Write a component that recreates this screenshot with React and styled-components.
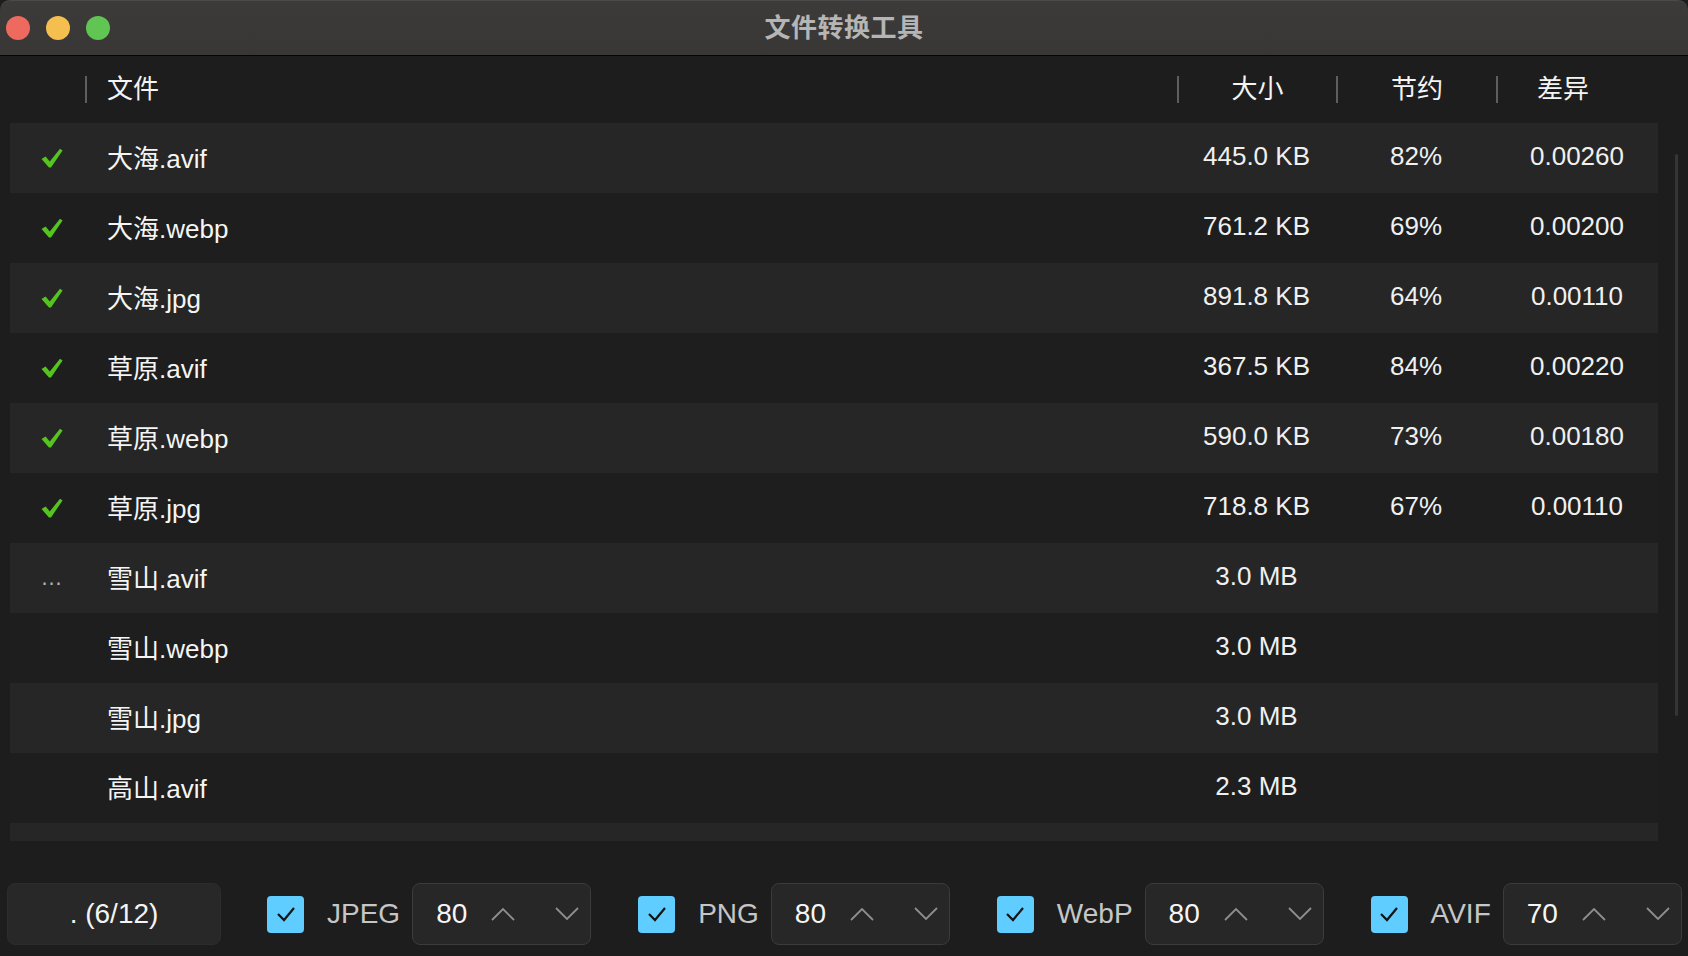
import React from 'react';
import styled, { createGlobalStyle } from 'styled-components';

const Global = createGlobalStyle`
  html, body {
    margin: 0;
    padding: 0;
    background: #1d1d1d;
  }
  body {
    font-family: "Liberation Sans", "Noto Sans CJK SC", sans-serif;
    color: #f2f2f2;
  }
`;

const Window = styled.div`
  width: 1688px;
  height: 956px;
  display: flex;
  flex-direction: column;
  background: #1d1d1d;
  overflow: hidden;
`;

const TitleBar = styled.div`
  height: 56px;
  flex-shrink: 0;
  box-sizing: border-box;
  display: grid;
  grid-template-columns: 1fr auto 1fr;
  align-items: center;
  padding-left: 6px;
  background: linear-gradient(180deg, #3c3b3a 0%, #383735 100%);
  border-top: 1px solid #4a4a4a;
  border-bottom: 1px solid #050505;
  border-radius: 10px 10px 0 0;
`;

const Lights = styled.div`
  display: flex;
  gap: 16px;
`;

const Light = styled.span`
  width: 24px;
  height: 24px;
  border-radius: 50%;
  background: ${p => p.$color};
`;

const Title = styled.div`
  font-size: 26px;
  font-weight: 700;
  color: #b5b5b5;
  letter-spacing: 0.5px;
  line-height: 1;
  margin-right: 6px;
`;

const Body = styled.div`
  display: flex;
  padding-left: 10px;
  flex-shrink: 0;
`;

const Table = styled.div`
  flex: 1;
  display: flex;
  flex-direction: column;
`;

const Gutter = styled.div`
  width: 30px;
  display: flex;
  justify-content: flex-end;
  padding-right: 10px;
  box-sizing: border-box;
`;

const Thumb = styled.div`
  width: 3px;
  height: 562px;
  margin-top: 98px;
  border-radius: 2px;
  background: #353535;
`;

const cols = '75px 1092px 159px 160px 1fr';

const HeaderRow = styled.div`
  height: 67px;
  display: grid;
  grid-template-columns: ${cols};
  align-items: center;
`;

const HeaderCell = styled.div`
  height: 27px;
  display: flex;
  align-items: center;
  justify-content: ${p => (p.$left ? 'flex-start' : 'center')};
  padding-left: ${p => (p.$left ? '20px' : '0')};
  padding-right: ${p => p.$pr || 0}px;
  border-left: ${p => (p.$bare ? 'none' : '2px solid #5e5e5e')};
  font-size: 26px;
  line-height: 1.2;
  color: #f4f4f4;
`;

const List = styled.div`
  height: 718px;
  overflow: hidden;
`;

const Row = styled.div`
  height: 70px;
  display: grid;
  grid-template-columns: ${cols};
  align-items: center;
  background: ${p => (p.$alt ? '#262626' : '#1e1e1e')};
  font-size: 26px;
  line-height: 1.2;
`;

const Status = styled.div`
  display: flex;
  justify-content: center;
  padding-left: 8px;
  color: #b4b4b4;
  font-size: 22px;
`;

const Name = styled.div`
  padding-left: 22px;
  padding-top: 4px;
  color: #f5f5f5;
  white-space: nowrap;
`;

const Num = styled.div`
  text-align: center;
  color: #f0f0f0;
  padding-bottom: 2px;
`;

const Footer = styled.div`
  flex: 1;
  display: flex;
  align-items: center;
  padding: 31px 0 0 7px;
  font-size: 28px;
  line-height: 1.2;
`;

const ProgressButton = styled.div`
  width: 214px;
  height: 62px;
  flex-shrink: 0;
  box-sizing: border-box;
  display: flex;
  align-items: center;
  justify-content: center;
  background: #282828;
  border: 1px solid #2c2c2c;
  border-radius: 8px;
  color: #f4f4f4;
  margin-right: 46px;
`;

const Group = styled.div`
  display: flex;
  flex-shrink: 0;
  align-items: center;
  margin-right: 47px;

  &:last-child {
    margin-right: 0;
  }
`;

const Box = styled.span`
  width: 37px;
  height: 37px;
  flex-shrink: 0;
  border-radius: 4px;
  background: #5fcdff;
  display: flex;
  align-items: center;
  justify-content: center;
  margin-right: 23px;
`;

const Label = styled.span`
  color: #c6c6c6;
  margin-right: 12px;
`;

const Spin = styled.div`
  width: 179px;
  height: 62px;
  flex-shrink: 0;
  box-sizing: border-box;
  display: flex;
  align-items: center;
  padding: 0 11px 0 23px;
  background: #272727;
  border: 1.5px solid #3b3b3b;
  border-radius: 8px;
  color: #f6f6f6;
`;

const Arrows = styled.div`
  margin-left: auto;
  display: flex;
  gap: 40px;
  align-items: center;
`;

const Chevron = ({ up }) => (
  <svg width="24" height="14" viewBox="0 0 24 14" fill="none">
    <polyline
      points={up ? '1,13 12,2 23,13' : '1,1 12,12 23,1'}
      stroke="#8e8e8e"
      strokeWidth="1.8"
      strokeLinejoin="miter"
    />
  </svg>
);

const Tick = () => (
  <svg width="22" height="20" viewBox="0 0 22 20">
    <path d="M0.5 11 L4.6 8.4 L8.8 13.4 L19 0.8 L21.6 2.4 L10 19.4 L8 19.4 Z" fill="#56c41e" />
  </svg>
);

const BoxTick = () => (
  <svg width="22" height="18" viewBox="0 0 22 18" fill="none">
    <polyline points="3,9 9,15 19,3" stroke="#141414" strokeWidth="2.2" />
  </svg>
);

const rows = [
  { st: 'done', name: '大海.avif', size: '445.0 KB', save: '82%', diff: '0.00260' },
  { st: 'done', name: '大海.webp', size: '761.2 KB', save: '69%', diff: '0.00200' },
  { st: 'done', name: '大海.jpg', size: '891.8 KB', save: '64%', diff: '0.00110' },
  { st: 'done', name: '草原.avif', size: '367.5 KB', save: '84%', diff: '0.00220' },
  { st: 'done', name: '草原.webp', size: '590.0 KB', save: '73%', diff: '0.00180' },
  { st: 'done', name: '草原.jpg', size: '718.8 KB', save: '67%', diff: '0.00110' },
  { st: 'busy', name: '雪山.avif', size: '3.0 MB' },
  { st: '', name: '雪山.webp', size: '3.0 MB' },
  { st: '', name: '雪山.jpg', size: '3.0 MB' },
  { st: '', name: '高山.avif', size: '2.3 MB' },
  { st: '', name: '高山.webp', size: '2.3 MB' },
  { st: '', name: '高山.jpg', size: '2.3 MB' },
];

// only the rows that reach into the visible part of the list
const visibleRows = rows.slice(0, 11);

const formats = [
  { label: 'JPEG', value: 80 },
  { label: 'PNG', value: 80 },
  { label: 'WebP', value: 80 },
  { label: 'AVIF', value: 70 },
];

export default function App() {
  return (
    <Window>
      <Global />
      <TitleBar>
        <Lights>
          <Light $color="#ee6a5e" />
          <Light $color="#f5bf4f" />
          <Light $color="#61c554" />
        </Lights>
        <Title>文件转换工具</Title>
        <div />
      </TitleBar>

      <Body>
        <Table>
          <HeaderRow>
            <HeaderCell $bare />
            <HeaderCell $left>文件</HeaderCell>
            <HeaderCell>大小</HeaderCell>
            <HeaderCell>节约</HeaderCell>
            <HeaderCell $pr={30}>差异</HeaderCell>
          </HeaderRow>
          <List>
            {visibleRows.map((r, i) => (
              <Row key={r.name} $alt={i % 2 === 0}>
                <Status>{r.st === 'done' ? <Tick /> : r.st === 'busy' ? '…' : null}</Status>
                <Name>{r.name}</Name>
                <Num>{r.size}</Num>
                <Num>{r.save || ''}</Num>
                <Num>{r.diff || ''}</Num>
              </Row>
            ))}
          </List>
        </Table>
        <Gutter>
          <Thumb />
        </Gutter>
      </Body>

      <Footer>
        <ProgressButton>. (6/12)</ProgressButton>
        {formats.map(f => (
          <Group key={f.label}>
            <Box>
              <BoxTick />
            </Box>
            <Label>{f.label}</Label>
            <Spin>
              {f.value}
              <Arrows>
                <Chevron up />
                <Chevron />
              </Arrows>
            </Spin>
          </Group>
        ))}
      </Footer>
    </Window>
  );
}
